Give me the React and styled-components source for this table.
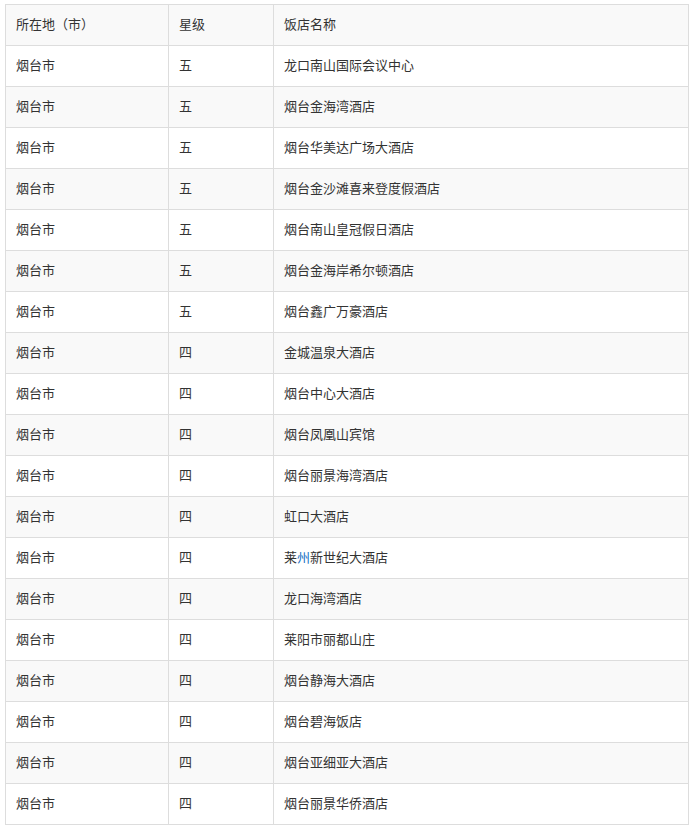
import React from 'react';
import styled, { createGlobalStyle } from 'styled-components';

const GlobalStyle = createGlobalStyle`
  body {
    margin: 0;
    background: #fff;
    font-family: "Noto Sans CJK SC", "Noto Sans", sans-serif;
  }
`;

const Wrapper = styled.div`
  padding: 4px 0 0 5px;
`;

const Table = styled.table`
  width: 683px;
  border-collapse: collapse;
  table-layout: fixed;
  font-size: 13px;
  color: #333;
`;

const Row = styled.tr`
  background: ${props => (props.striped ? '#f9f9f9' : '#fff')};
`;

const Cell = styled.td`
  box-sizing: border-box;
  height: 41px;
  padding: 0 10px 2px 10px;
  border: 1px solid #ddd;
  line-height: 20px;
  vertical-align: middle;
  white-space: nowrap;
  overflow: hidden;
`;

const Link = styled.span`
  color: #136ec2;
`;

const hotels = [
  ['五', '龙口南山国际会议中心'],
  ['五', '烟台金海湾酒店'],
  ['五', '烟台华美达广场大酒店'],
  ['五', '烟台金沙滩喜来登度假酒店'],
  ['五', '烟台南山皇冠假日酒店'],
  ['五', '烟台金海岸希尔顿酒店'],
  ['五', '烟台鑫广万豪酒店'],
  ['四', '金城温泉大酒店'],
  ['四', '烟台中心大酒店'],
  ['四', '烟台凤凰山宾馆'],
  ['四', '烟台丽景海湾酒店'],
  ['四', '虹口大酒店'],
  ['四', <>莱<Link>州</Link>新世纪大酒店</>],
  ['四', '龙口海湾酒店'],
  ['四', '莱阳市丽都山庄'],
  ['四', '烟台静海大酒店'],
  ['四', '烟台碧海饭店'],
  ['四', '烟台亚细亚大酒店'],
  ['四', '烟台丽景华侨酒店'],
];

const App = () => (
  <>
    <GlobalStyle />
    <Wrapper>
      <Table>
        <colgroup>
          <col style={{ width: 163 }} />
          <col style={{ width: 105 }} />
          <col style={{ width: 415 }} />
        </colgroup>
        <tbody>
          <Row striped>
            <Cell>所在地（市）</Cell>
            <Cell>星级</Cell>
            <Cell>饭店名称</Cell>
          </Row>
          {hotels.map(([star, name], i) => (
            <Row key={i} striped={i % 2 === 1}>
              <Cell>烟台市</Cell>
              <Cell>{star}</Cell>
              <Cell>{name}</Cell>
            </Row>
          ))}
        </tbody>
      </Table>
    </Wrapper>
  </>
);

export default App;
